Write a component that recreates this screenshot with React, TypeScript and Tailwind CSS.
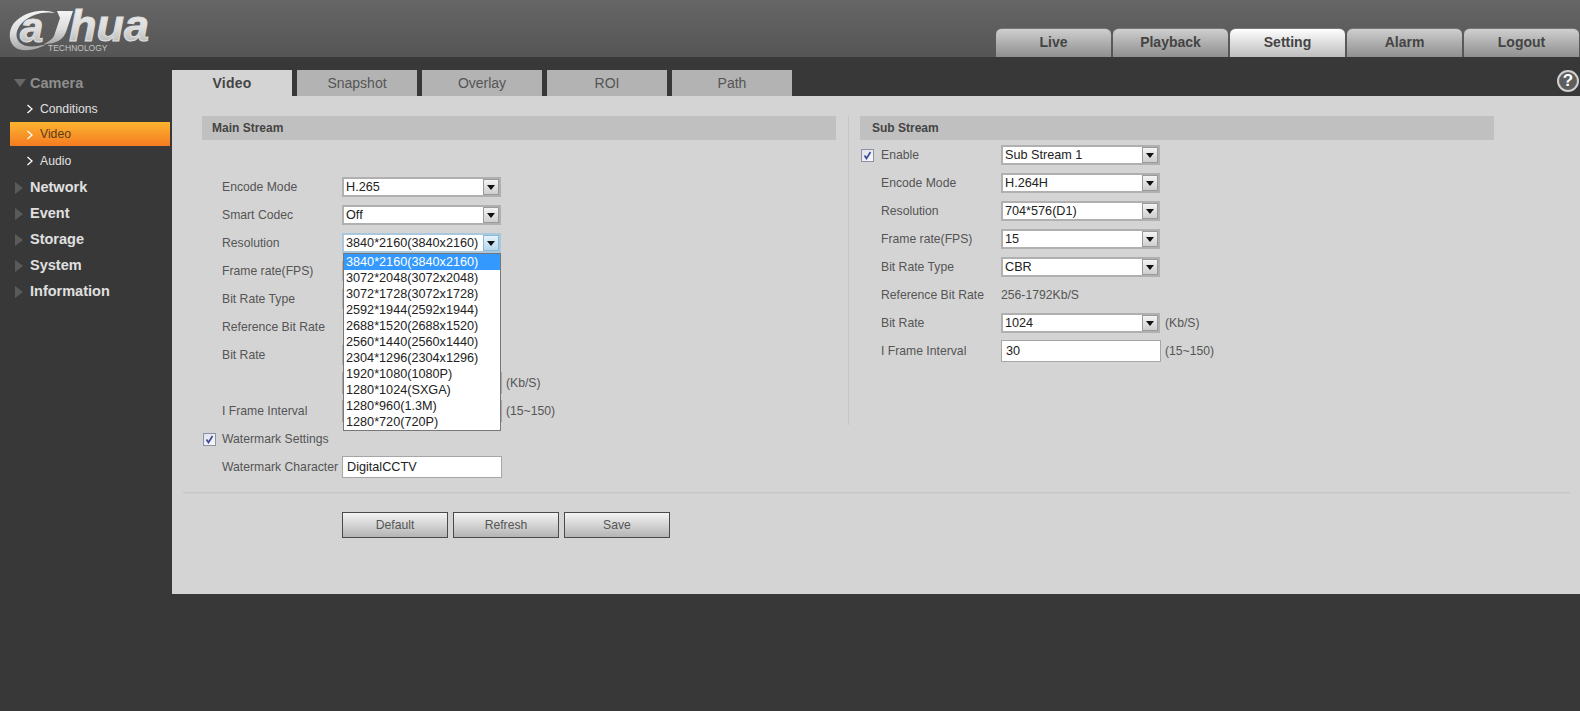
const resolutions = [
  "3840*2160(3840x2160)",
  "3072*2048(3072x2048)",
  "3072*1728(3072x1728)",
  "2592*1944(2592x1944)",
  "2688*1520(2688x1520)",
  "2560*1440(2560x1440)",
  "2304*1296(2304x1296)",
  "1920*1080(1080P)",
  "1280*1024(SXGA)",
  "1280*960(1.3M)",
  "1280*720(720P)",
];

const topTabs = ["Live", "Playback", "Setting", "Alarm", "Logout"];
const subTabs = ["Video", "Snapshot", "Overlay", "ROI", "Path"];

const Logo = () => (
  <svg width="170" height="57" viewBox="0 0 170 57" className="block">
    <defs>
      <linearGradient id="logoFill" x1="0" y1="0" x2="0" y2="1">
        <stop offset="0" stopColor="#f4f4f4" />
        <stop offset="0.55" stopColor="#dcdcdc" />
        <stop offset="1" stopColor="#a8a8a8" />
      </linearGradient>
    </defs>
    <path
      d="M55 13 C44 8 24 11 14 23 C7 32 9 45 18 49 C27 52 38 49 47 44 C37 47 26 48 20 43 C14 37 16 28 24 21 C32 14 44 11 55 13 Z"
      fill="url(#logoFill)"
    />
    <text
      x="20"
      y="42"
      fontFamily="Liberation Sans"
      fontWeight="700"
      fontStyle="italic"
      fontSize="42"
      fill="url(#logoFill)"
      stroke="#e0e0e0"
      strokeWidth="1"
    >
      a
    </text>
    <path d="M57 11 H73 L66 32 C63 40 56 44 44 44 C50 41 54 38 55 33 L60 18 Z" fill="url(#logoFill)" />
    <text
      x="69"
      y="41"
      fontFamily="Liberation Sans"
      fontWeight="700"
      fontStyle="italic"
      fontSize="45"
      fill="url(#logoFill)"
      stroke="#e0e0e0"
      strokeWidth="1"
    >
      hua
    </text>
    <text x="48" y="51" fontFamily="Liberation Sans" fontSize="8.500" fill="#c4c4c4">
      TECHNOLOGY
    </text>
  </svg>
);

const Chevron = () => (
  <svg width="8" height="10" viewBox="0 0 8 10" className="shrink-0">
    <path d="M1.500 1 L6 5 L1.500 9" fill="none" stroke="#ffffff" strokeWidth="1.300" />
  </svg>
);

const SideGroup = ({ label, open }: { label: string; open?: boolean }) => (
  <div className="flex h-[26px] items-center pl-[4px] pt-[1px]">
    <svg width="16" height="12" viewBox="0 0 16 12" className="shrink-0">
      {open ? (
        <polygon points="0,1 12,1 6,9" fill="#666666" />
      ) : (
        <polygon points="1,0 1,12 9,6" fill="#5a5a5a" />
      )}
    </svg>
    <span className={`text-[14.500px] font-bold ${open ? "text-[#8e8e8e]" : "text-[#e0e0e0]"}`}>{label}</span>
  </div>
);

const SideItem = ({ label, active }: { label: string; active?: boolean }) => (
  <div className="flex h-[26px] items-start">
    <div
      className={`flex h-[24px] w-[160px] items-center gap-[6px] pl-[16px] text-[12.200px] ${
        active
          ? "bg-gradient-to-b from-[#fbb42f] to-[#f57b22] pt-[1px] text-[#5b3a1c]"
          : "translate-y-[1px] text-[#e0e0e0]"
      }`}
    >
      <Chevron />
      {label}
    </div>
  </div>
);

const DropArrow = ({ focused }: { focused?: boolean }) => (
  <div
    className={`flex h-[16px] w-[16px] items-center justify-center border ${
      focused
        ? "border-[#8fb8d8] bg-gradient-to-b from-[#e6f3fb] to-[#b6d8ee]"
        : "border-[#9a9a9a] bg-gradient-to-b from-[#f4f4f4] to-[#cfcfcf]"
    }`}
  >
    <svg width="8" height="5" viewBox="0 0 8 5">
      <polygon points="0,0 8,0 4,5" fill="#111111" />
    </svg>
  </div>
);

const Select = ({ value, focused }: { value?: string; focused?: boolean }) => (
  <div
    className={`flex h-[20px] w-[159px] items-center justify-between border-2 bg-white pl-[2px] text-[12.670px] leading-none text-[#222] ${
      focused ? "border-[#a9c8de]" : "border-[#b0b0b0]"
    }`}
  >
    <span>{value}</span>
    <DropArrow focused={focused} />
  </div>
);

const TextBox = ({ value }: { value?: string }) => (
  <div className="mr-[-1px] flex h-[22px] w-[160px] items-center border border-[#a6a6a6] bg-white pl-[4px] text-[12.670px] text-[#222]">
    {value}
  </div>
);

const Row = ({ label, children, right }: { label: string; children?: React.ReactNode; right?: boolean }) => (
  <div className={`flex h-[28px] items-center text-[12.200px] text-[#555] ${right ? "pl-[21px]" : "pl-[20px]"}`}>
    <span className="w-[120px] shrink-0 whitespace-nowrap">{label}</span>
    {children}
  </div>
);

const Unit = ({ children }: { children: string }) => (
  <span className="ml-[5px] text-[12.200px] text-[#555]">{children}</span>
);

const Check = () => (
  <div className="flex h-[13px] w-[13px] shrink-0 items-center justify-center border border-[#8c90a8] bg-gradient-to-br from-[#dfe1e8] to-[#fafafa]">
    <svg width="9" height="9" viewBox="0 0 9 9">
      <path d="M1.500 4.500 L3.500 7.500 L7.500 1" fill="none" stroke="#3d4a9c" strokeWidth="1.700" />
    </svg>
  </div>
);

const SectionBar = ({ title, right }: { title: string; right?: boolean }) => (
  <div
    className={`flex h-[24px] items-center bg-[#c0c0c0] text-[12px] font-bold text-[#444] ${
      right ? "pl-[12px]" : "pl-[10px]"
    }`}
  >
    {title}
  </div>
);

const Btn = ({ label }: { label: string }) => (
  <button className="h-[26px] w-[106px] border border-[#4a4a4a] bg-gradient-to-b from-[#f4f4f4] to-[#b4b4b4] text-[12.200px] text-[#555]">
    {label}
  </button>
);

export default function App() {
  return (
    <div className="min-h-[711px] w-full bg-[#383838] font-['Liberation_Sans',Arial,sans-serif]">
      <header className="flex h-[57px] items-end justify-between bg-gradient-to-b from-[#666666] to-[#555555]">
        <Logo />
        <nav className="flex gap-[2px] pr-[1px]">
          {topTabs.map((t) => (
            <div
              key={t}
              className={`flex h-[29px] w-[115px] items-center justify-center rounded-t-[6px] border-t border-[#777] pb-[2px] text-[14px] font-bold ${
                t === "Setting"
                  ? "bg-gradient-to-b from-[#ffffff] to-[#bdbdbd] text-[#444]"
                  : "bg-gradient-to-b from-[#cfcfcf] to-[#8f8f8f] text-[#444]"
              }`}
            >
              {t}
            </div>
          ))}
        </nav>
      </header>

      <div className="flex pt-[13px]">
        <aside className="w-[172px] shrink-0 pl-[10px]">
          <SideGroup label="Camera" open />
          <SideItem label="Conditions" />
          <SideItem label="Video" active />
          <SideItem label="Audio" />
          <SideGroup label="Network" />
          <SideGroup label="Event" />
          <SideGroup label="Storage" />
          <SideGroup label="System" />
          <SideGroup label="Information" />
        </aside>

        <main className="min-w-0 flex-1">
          <div className="flex h-[26px] gap-[5px]">
            {subTabs.map((t) => (
              <div
                key={t}
                className={`flex w-[120px] items-center justify-center text-[14px] ${
                  t === "Video" ? "bg-[#d4d4d4] font-bold tracking-[0.2px] text-[#444]" : "bg-[#b3b3b3] text-[#555]"
                }`}
              >
                {t}
              </div>
            ))}
            <div className="ml-auto mr-[1px] flex h-[22px] w-[22px] items-center justify-center rounded-full border-2 border-[#cfcfcf] bg-[#5e5e5e] text-[17px] font-bold text-white">
              ?
            </div>
          </div>

          <div className="h-[498px] bg-[#d4d4d4] pt-[20px]">
            <div className="flex pl-[30px]">
              <section className="w-[634px] shrink-0">
                <SectionBar title="Main Stream" />
                <div className="h-[33px]" />
                <Row label="Encode Mode">
                  <Select value="H.265" />
                </Row>
                <Row label="Smart Codec">
                  <Select value="Off" />
                </Row>
                <Row label="Resolution">
                  <div className="relative">
                    <Select value="3840*2160(3840x2160)" focused />
                    <ul className="absolute left-[1px] top-[20px] z-10 w-[158px] border border-[#777] bg-white text-[12.670px] leading-[16px] text-[#222]">
                      {resolutions.map((r, i) => (
                        <li key={r} className={`h-[16px] pl-[2px] ${i === 0 ? "bg-[#3399ff] text-white" : ""}`}>
                          {r}
                        </li>
                      ))}
                    </ul>
                  </div>
                </Row>
                <Row label="Frame rate(FPS)">
                  <Select />
                </Row>
                <Row label="Bit Rate Type">
                  <Select />
                </Row>
                <Row label="Reference Bit Rate" />
                <Row label="Bit Rate">
                  <Select />
                </Row>
                <Row label="">
                  <TextBox />
                  <Unit>(Kb/S)</Unit>
                </Row>
                <Row label="I Frame Interval">
                  <TextBox />
                  <Unit>(15~150)</Unit>
                </Row>
                <div className="flex h-[28px] items-center pl-[1px] text-[12.200px] text-[#555]">
                  <Check />
                  <span className="ml-[6px]">Watermark Settings</span>
                </div>
                <Row label="Watermark Character">
                  <TextBox value="DigitalCCTV" />
                </Row>
              </section>

              <div className="ml-[12px] mr-[11px] h-[309px] w-[1px] bg-[#c6c6c6]" />

              <section className="w-[634px] shrink-0">
                <SectionBar title="Sub Stream" right />
                <div className="h-[1px]" />
                <div className="flex h-[28px] items-center pl-[1px] text-[12.200px] text-[#555]">
                  <Check />
                  <span className="ml-[7px] w-[120px]">Enable</span>
                  <Select value="Sub Stream 1" />
                </div>
                <Row right label="Encode Mode">
                  <Select value="H.264H" />
                </Row>
                <Row right label="Resolution">
                  <Select value="704*576(D1)" />
                </Row>
                <Row right label="Frame rate(FPS)">
                  <Select value="15" />
                </Row>
                <Row right label="Bit Rate Type">
                  <Select value="CBR" />
                </Row>
                <Row right label="Reference Bit Rate">
                  <span>256-1792Kb/S</span>
                </Row>
                <Row right label="Bit Rate">
                  <Select value="1024" />
                  <Unit>(Kb/S)</Unit>
                </Row>
                <Row right label="I Frame Interval">
                  <TextBox value="30" />
                  <Unit>(15~150)</Unit>
                </Row>
              </section>
            </div>

            <div className="ml-[11px] mr-[10px] mt-[11px] h-[3px] bg-gradient-to-b from-[#c4c4c4] to-[#d8d8d8]" />

            <div className="mt-[17px] flex gap-[5px] pl-[170px]">
              <Btn label="Default" />
              <Btn label="Refresh" />
              <Btn label="Save" />
            </div>
          </div>
        </main>
      </div>
    </div>
  );
}
